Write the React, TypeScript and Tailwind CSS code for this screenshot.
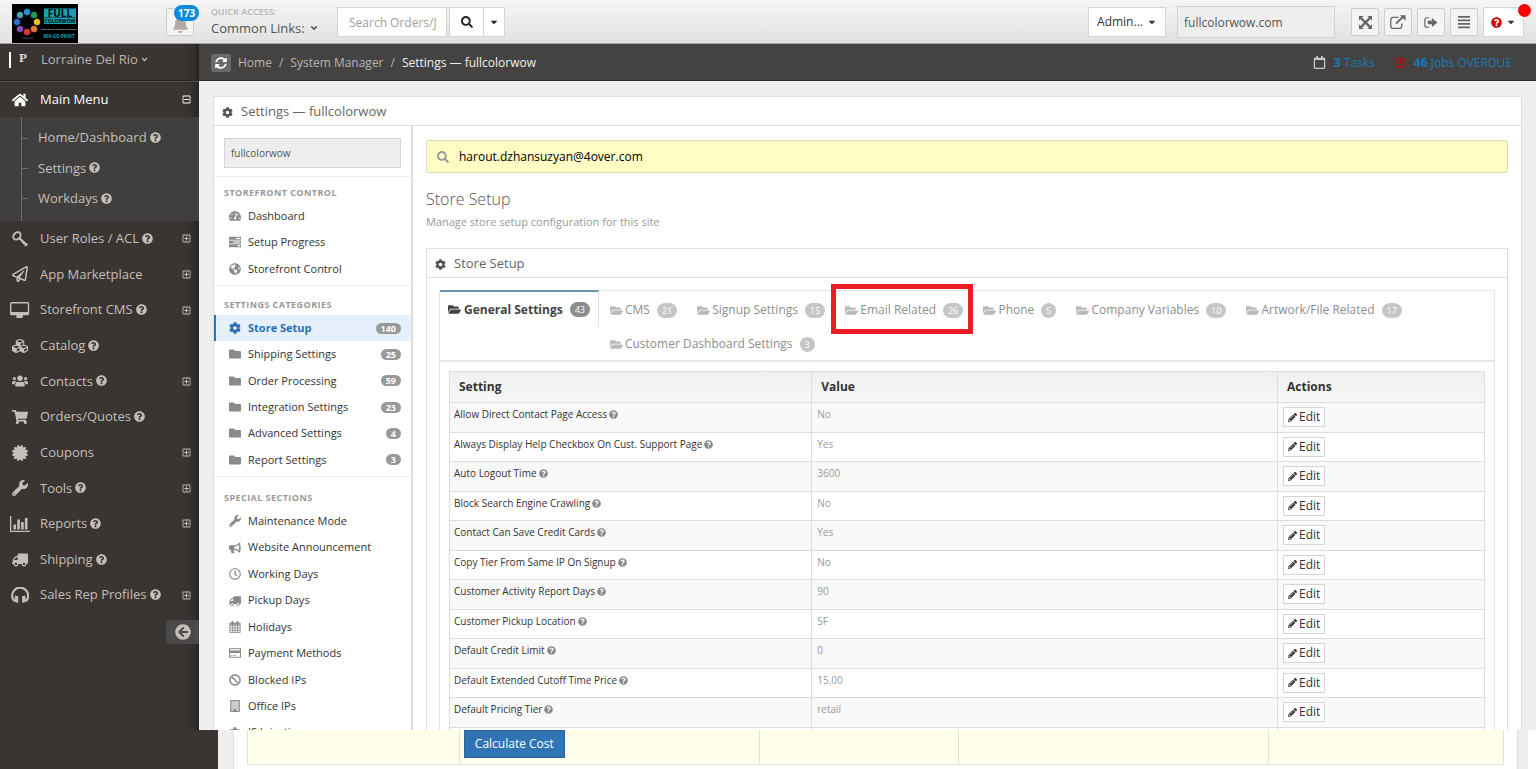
import type { ReactNode } from "react";
import type { IconType } from "react-icons";
import {
  FaAlignJustify,
  FaAngleDown,
  FaArrowCircleLeft,
  FaBan,
  FaBell,
  FaBullhorn,
  FaCaretDown,
  FaCertificate,
  FaCog,
  FaCubes,
  FaFolder,
  FaFolderOpen,
  FaGlobeAmericas,
  FaHome,
  FaPencilAlt,
  FaQuestionCircle,
  FaRegCalendar,
  FaRegClock,
  FaRegMinusSquare,
  FaRegPaperPlane,
  FaRegPlusSquare,
  FaSearch,
  FaShoppingCart,
  FaSyncAlt,
  FaTachometerAlt,
  FaTruck,
  FaUsers,
  FaWrench,
} from "react-icons/fa";

type IconProps = { className?: string };

function KeyIcon({ className }: IconProps) {
  return (
    <svg viewBox="0 0 16 16" className={className} fill="none" stroke="currentColor" strokeWidth="1.9">
      <ellipse cx="4.9" cy="4.9" rx="4.1" ry="3.1" transform="rotate(-45 4.9 4.9)" />
      <path d="M7.6 7.4 14.8 14.2M10.6 12.6l2-2.2M13 15l2.2-2.4" strokeWidth="2.2" />
    </svg>
  );
}

function DesktopIcon({ className }: IconProps) {
  return (
    <svg viewBox="0 0 18 15" className={className} fill="currentColor">
      <path fillRule="evenodd" d="M1.500 0h15A1.500 1.500 0 0 1 18 1.500v9.500a1.500 1.500 0 0 1-1.500 1.500H12V15H6v-2.500H1.500A1.500 1.500 0 0 1 0 11V1.500A1.500 1.500 0 0 1 1.500 0zM1.300 1.300v8h15.400v-8z" />
    </svg>
  );
}

function HeadphonesIcon({ className }: IconProps) {
  return (
    <svg viewBox="0 0 16 14" className={className}>
      <path d="M3 12.500A7 7 0 1 1 13 12.500" fill="none" stroke="currentColor" strokeWidth="1.900" />
      <path d="M3.500 7.500 6.300 8v6L3 13zM12.500 7.500 9.700 8v6l3.300-1z" fill="currentColor" />
    </svg>
  );
}

function BarsIcon({ className }: IconProps) {
  return (
    <svg viewBox="0 0 20 16" className={className} fill="currentColor">
      <path d="M0 0h1.3v14.7H20V16H0zM3.5 8.5h2.6v5H3.5zM7.3 3.5h2.6v10H7.3zM11.1 6h2.6v7.5h-2.6zM14.9 2h2.6v11.5h-2.6z" />
    </svg>
  );
}

function TasksIcon({ className }: IconProps) {
  return (
    <svg viewBox="0 0 14 12" className={className} fill="currentColor">
      <path fillRule="evenodd" d="M0 0h14v3.4H0zM8.5 1v1.4H13V1zM0 4.3h14v3.4H0zM5 5.3v1.4h8V5.3zM0 8.6h14V12H0zM10 9.6V11h3V9.6z" />
    </svg>
  );
}

function ArrowsIcon({ className }: IconProps) {
  return (
    <svg viewBox="0 0 14 14" className={className}>
      <path d="M2 2l10 10M12 2 2 12" stroke="currentColor" strokeWidth="2.400" />
      <path d="M0 0h5L0 5zM14 0v5L9 0zM0 14V9l5 5zM14 14H9l5-5z" fill="currentColor" />
    </svg>
  );
}

function ExternalIcon({ className }: IconProps) {
  return (
    <svg viewBox="0 0 16 14" className={className} fill="none" stroke="currentColor">
      <path d="M8.5 2.3H3A2.2 2.2 0 0 0 .8 4.500v6.600A2.200 2.200 0 0 0 3 13.300h6.600a2.200 2.200 0 0 0 2.200-2.200V8.500" strokeWidth="1.3" />
      <path d="M6 8.600 13 1.800" strokeWidth="1.900" />
      <path d="M10 .2h5.500v5.500z" fill="currentColor" stroke="none" />
    </svg>
  );
}

function SignOutIcon({ className }: IconProps) {
  return (
    <svg viewBox="0 0 15 12" className={className}>
      <path d="M5.500.8H3A2.200 2.200 0 0 0 .8 3v6A2.200 2.200 0 0 0 3 11.200h2.500" fill="none" stroke="currentColor" strokeWidth="1.300" />
      <path d="M4 4h4.500V1L14.500 6l-6 5V8H4z" fill="currentColor" />
    </svg>
  );
}

function CalendarIcon({ className }: IconProps) {
  return (
    <svg viewBox="0 0 13 14" className={className} fill="none" stroke="currentColor">
      <path d="M.5 2.500h12v11H.5zM.5 5.500h12M.5 8.200h12M.5 10.900h12M3.500 5v8.500M6.500 5v8.500M9.500 5v8.500" />
      <path d="M1 3.500h11" strokeWidth="2" />
      <path d="M3.500 0v4M9.500 0v4" strokeWidth="2" />
    </svg>
  );
}

function CardIcon({ className }: IconProps) {
  return (
    <svg viewBox="0 0 14 12" className={className}>
      <path d="M.6 1.100h12.800v9.800H.6z" fill="none" stroke="currentColor" strokeWidth="1.200" />
      <path d="M.6 3h12.800v3H.6zM2 8.500h2v1H2zM5 8.500h3v1H5z" fill="currentColor" />
    </svg>
  );
}

function BuildingIcon({ className }: IconProps) {
  return (
    <svg viewBox="0 0 12 14" className={className}>
      <path d="M1 .6h10v12.800H1z" fill="#c9c9c9" stroke="currentColor" strokeWidth="1.200" />
      <path d="M4.500 10.500h3V14h-3z" fill="currentColor" />
    </svg>
  );
}

function TruckIcon({ className = "" }: IconProps) {
  return <FaTruck className={`${className} -scale-x-100`} />;
}

type Icon = IconType | ((props: IconProps) => ReactNode);

const subMenu = ["Home/Dashboard", "Settings", "Workdays"];

const menu: { label: string; icon: Icon; help?: boolean; plus?: boolean }[] = [
  { label: "User Roles / ACL", icon: KeyIcon, help: true, plus: true },
  { label: "App Marketplace", icon: FaRegPaperPlane, plus: true },
  { label: "Storefront CMS", icon: DesktopIcon, help: true, plus: true },
  { label: "Catalog", icon: FaCubes, help: true },
  { label: "Contacts", icon: FaUsers, help: true, plus: true },
  { label: "Orders/Quotes", icon: FaShoppingCart, help: true },
  { label: "Coupons", icon: FaCertificate, plus: true },
  { label: "Tools", icon: FaWrench, help: true, plus: true },
  { label: "Reports", icon: BarsIcon, help: true, plus: true },
  { label: "Shipping", icon: TruckIcon, help: true },
  { label: "Sales Rep Profiles", icon: HeadphonesIcon, help: true, plus: true },
];

type NavItem = { label: string; icon: Icon; count?: number; active?: boolean };

const storefront: NavItem[] = [
  { label: "Dashboard", icon: FaTachometerAlt },
  { label: "Setup Progress", icon: TasksIcon },
  { label: "Storefront Control", icon: FaGlobeAmericas },
];

const categories: NavItem[] = [
  { label: "Store Setup", icon: FaCog, count: 140, active: true },
  { label: "Shipping Settings", icon: FaFolder, count: 25 },
  { label: "Order Processing", icon: FaFolder, count: 59 },
  { label: "Integration Settings", icon: FaFolder, count: 23 },
  { label: "Advanced Settings", icon: FaFolder, count: 4 },
  { label: "Report Settings", icon: FaFolder, count: 3 },
];

const special: NavItem[] = [
  { label: "Maintenance Mode", icon: FaWrench },
  { label: "Website Announcement", icon: FaBullhorn },
  { label: "Working Days", icon: FaRegClock },
  { label: "Pickup Days", icon: TruckIcon },
  { label: "Holidays", icon: CalendarIcon },
  { label: "Payment Methods", icon: CardIcon },
  { label: "Blocked IPs", icon: FaBan },
  { label: "Office IPs", icon: BuildingIcon },
  { label: "JS Injection", icon: FaCog },
];

const tabs = [
  { label: "CMS", count: 21 },
  { label: "Signup Settings", count: 15 },
  { label: "Email Related", count: 26, marked: true },
  { label: "Phone", count: 5 },
  { label: "Company Variables", count: 10 },
  { label: "Artwork/File Related", count: 17 },
  { label: "Customer Dashboard Settings", count: 3 },
];

const settings = [
  ["Allow Direct Contact Page Access", "No"],
  ["Always Display Help Checkbox On Cust. Support Page", "Yes"],
  ["Auto Logout Time", "3600"],
  ["Block Search Engine Crawling", "No"],
  ["Contact Can Save Credit Cards", "Yes"],
  ["Copy Tier From Same IP On Signup", "No"],
  ["Customer Activity Report Days", "90"],
  ["Customer Pickup Location", "SF"],
  ["Default Credit Limit", "0"],
  ["Default Extended Cutoff Time Price", "15.00"],
  ["Default Pricing Tier", "retail"],
];

const wheel = [
  { x: 15, y: 8, color: "#2b8fd6" },
  { x: 22, y: 11, color: "#1f9d55" },
  { x: 25, y: 18, color: "#e8c11c" },
  { x: 22, y: 25, color: "#e07a2a" },
  { x: 15, y: 28, color: "#d8382e" },
  { x: 8, y: 25, color: "#8c4bb8" },
  { x: 5, y: 18, color: "#2f6fd0" },
  { x: 8, y: 11, color: "#4ba3b5" },
];

function Logo() {
  return (
    <svg viewBox="0 0 66 39" className="h-[39px] w-[66px] shrink-0 self-end bg-black" aria-label="Full Color Wow">
      {wheel.map((dot) => (
        <circle key={dot.color} cx={dot.x} cy={dot.y} r="3.500" fill={dot.color} stroke="#000" strokeWidth="1" strokeDasharray="1 .6" />
      ))}
      <path d="M10 34h11" stroke="#1c5560" strokeWidth="1" />
      <path d="M32 4.500h32v9H32zM32 14h32v6H32z" fill="#15a3b3" />
      <g fontFamily="'Open Sans', sans-serif" fontWeight="700" textAnchor="middle">
        <text x="48" y="12.500" fontSize="10" fill="#000">FULL</text>
        <text x="48" y="19" fontSize="5" fill="#000">COLORWOW</text>
        <text x="47" y="25.500" fontSize="2" fill="#c9c9c9">YOUR ONLINE ONESTOP PRINTSHOP</text>
        <text x="47" y="33.500" fontSize="4.500" fill="#15a3b3">800-GO-PRINT</text>
      </g>
    </svg>
  );
}

function TopBar() {
  const tool = "flex h-7 w-7 items-center justify-center rounded-xs border border-[#cfcfcf] bg-[#f4f4f4] text-[#666]";
  return (
    <header className="flex h-11 shrink-0 items-center border-b border-[#a5a5a5] bg-linear-to-b from-[#f6f6f6] to-[#e1e1e1] pt-px pr-3 pl-3">
      <Logo />
      <button aria-label="Notifications" className="relative ml-[88px] flex h-7 w-7 items-center justify-center rounded-xs border border-[#cfcfcf] bg-[#f4f4f4] text-[#b5aaa5]">
        <FaBell className="mt-1 size-[17px]" />
        <span className="absolute -top-1 left-[7px] flex h-4 items-center rounded-full bg-[#0b8bd9] px-1 text-[10px] font-bold text-white">173</span>
      </button>
      <div className="ml-[17px] w-[110px] whitespace-nowrap">
        <div className="text-[9px] leading-3 font-semibold text-[#b3b3b3]">QUICK ACCESS:</div>
        <button className="flex items-center gap-1 text-[13px] leading-5 text-[#555]">
          Common Links: <FaAngleDown className="size-[10px]" />
        </button>
      </div>
      <input
        aria-label="Search orders"
        placeholder="Search Orders/J"
        className="ml-4 h-[30px] w-[110px] border border-[#d5d5d5] bg-white pl-[11px] text-[12px] placeholder:text-[#a0a0a0]"
      />
      <div className="ml-[2px] flex h-[30px] border border-[#d5d5d5] bg-white text-[#222]">
        <button aria-label="Search" className="flex w-[34px] items-center justify-center border-r border-[#d5d5d5]">
          <FaSearch className="size-3" />
        </button>
        <button aria-label="Search options" className="flex w-5 items-center justify-center">
          <FaCaretDown className="size-[10px]" />
        </button>
      </div>
      <button className="ml-auto flex h-[30px] w-[78px] items-center justify-center gap-1 border border-[#d5d5d5] bg-white text-[12px] text-[#333]">
        Admin... <FaCaretDown className="size-[10px]" />
      </button>
      <input aria-label="Site" defaultValue="fullcolorwow.com" className="ml-[11px] h-8 w-[158px] border border-[#d3d3d3] bg-[#eee] px-[6px] text-[12px] text-[#555]" />
      <div className="ml-4 flex gap-[5px]">
        <button aria-label="Full screen" className={tool}><ArrowsIcon className="size-[13px]" /></button>
        <button aria-label="Open store" className={tool}><ExternalIcon className="h-[14px] w-4" /></button>
        <button aria-label="Sign out" className={tool}><SignOutIcon className="h-[11px] w-[14px]" /></button>
        <button aria-label="Menu" className={tool}><FaAlignJustify className="size-[14px]" /></button>
        <button aria-label="Help" className="relative -my-px flex h-[30px] w-[41px] items-center justify-center gap-1 border border-[#d5d5d5] bg-white">
          <FaQuestionCircle className="size-[11px] text-[#d00000]" />
          <FaCaretDown className="size-[10px] text-[#333]" />
          <span className="absolute -top-1 -right-2 size-[13px] rounded-full bg-[#ff0000]" />
        </button>
      </div>
    </header>
  );
}

function Help() {
  return <FaQuestionCircle className="mb-px ml-[3px] size-[11px] shrink-0" />;
}

function Sidebar() {
  return (
    <aside className="w-[199px] shrink-0 bg-[#3a3532] text-[13px] text-[#c4bfbb] shadow-[inset_-10px_0_10px_-8px_rgba(0,0,0,0.5)]">
      <div className="flex h-[37px] items-start border-b border-[#292522] pt-1 pl-[9px]">
        <span className="mt-1 h-4 w-[2px] bg-white" />
        <span className="ml-2 w-3 font-['Liberation_Serif',serif] text-[13px] leading-[19px] font-bold text-[#ddd]">P</span>
        <button className="ml-[10px] flex items-center gap-[2px] pt-[2px] text-[13px] text-[#b8b3af]">
          Lorraine Del Rio <FaAngleDown className="size-[9px]" />
        </button>
      </div>
      <a href="#main" className="flex h-9 items-center border-t border-[#504b48] pr-2 text-white">
        <span className="flex w-10 justify-center"><FaHome className="size-4" /></span>
        <span className="font-medium">Main Menu</span>
        <FaRegMinusSquare className="ml-auto size-[9px]" />
      </a>
      <div className="h-[104px] bg-[#403f3d] pl-[21px]">
        <ul className="flex h-full flex-col border-l border-[#6f6d6b] pt-[6px] pb-[7px]">
          {subMenu.map((label) => (
            <li key={label} className="flex flex-1 items-center">
              <span className="w-[6px] border-t border-[#6f6d6b]" />
              <a href="#sub" className="ml-[10px] flex items-center">{label}<Help /></a>
            </li>
          ))}
        </ul>
      </div>
      <ul className="flex h-[392px] flex-col">
        {menu.map(({ label, icon: MenuIcon, help, plus }) => (
          <li key={label} className="flex-1">
            <a href="#menu" className="flex h-full items-center pr-2">
              <span className="flex w-10 justify-center"><MenuIcon className="h-4 w-auto" /></span>
              {label}
              {help && <Help />}
              {plus && <FaRegPlusSquare className="ml-auto size-[9px]" />}
            </a>
          </li>
        ))}
      </ul>
      <button aria-label="Collapse menu" className="mt-[7px] ml-auto flex h-6 w-[33px] items-center justify-center rounded-l bg-[#4a4a4a]">
        <FaArrowCircleLeft className="size-4" />
      </button>
    </aside>
  );
}

function Breadcrumbs() {
  return (
    <div className="flex h-[37px] shrink-0 items-center border-b border-[#2d2b2a] bg-[#454341] pt-px pr-6 pl-3 text-[12px] text-[#b5b5b5]">
      <button aria-label="Refresh" className="mr-[7px] flex h-[18px] w-5 items-center justify-center rounded-xs bg-[#6b6a69] text-white">
        <FaSyncAlt className="size-3" />
      </button>
      <nav className="flex gap-[7px]">
        <a href="#home">Home</a>
        <span>/</span>
        <a href="#system">System Manager</a>
        <span>/</span>
        <span className="text-[#eee]">Settings — fullcolorwow</span>
      </nav>
      <FaRegCalendar className="ml-auto size-[13px] shrink-0 text-[#c5d0d5]" />
      <a href="#tasks" className="ml-2 text-[#1579bd]"><b>3</b> Tasks</a>
      <FaRegClock className="ml-5 size-[11px] shrink-0 text-[#c00]" />
      <a href="#jobs" className="ml-2 text-[#1579bd]"><b>46</b> Jobs OVERDUE</a>
    </div>
  );
}

function PanelTitle({ children }: { children: ReactNode }) {
  return (
    <h2 className="flex h-[29px] items-center gap-2 border-b border-[#ddd] px-2 pt-[2px] text-[13px] text-[#666]">
      <FaCog className="size-[11px] text-[#555]" />
      {children}
    </h2>
  );
}

function NavGroup({ title, items, pad, height }: { title: string; items: NavItem[]; pad: string; height: string }) {
  return (
    <section className={`border-t border-[#eee] pb-[3px] ${pad}`}>
      <h3 className="mb-[2px] px-[10px] text-[9px] leading-[17px] font-bold tracking-wider text-[#999]">{title}</h3>
      <ul className={`flex flex-col ${height}`}>
        {items.map(({ label, icon: ItemIcon, count, active }) => (
          <li key={label} className="flex-1">
            <a
              href="#item"
              className={`flex h-full items-center border-l-2 pr-[10px] text-[11px] ${
                active ? "border-[#2a76b8] bg-[#e6effc] font-bold text-[#2a6fb0]" : "border-transparent text-[#333]"
              }`}
            >
              <span className={`flex w-8 justify-center pl-[6px] ${active ? "" : "text-[#8a8a8a]"}`}><ItemIcon className="size-3" /></span>
              <span>{label}</span>
              {count && (
                <span className="ml-auto rounded-full bg-[#999] px-[5px] text-[9px] leading-[11px] font-bold text-white">{count}</span>
              )}
            </a>
          </li>
        ))}
      </ul>
    </section>
  );
}

function Tabs() {
  return (
    <div className="flex h-[71px] items-start border-b-2 border-[#e8e8e8]">
      <button className="-mt-px flex h-[37px] shrink-0 items-center border-t-2 border-r border-t-[#6797ab] border-r-[#e0e0e0] px-2 text-[12px] font-bold text-[#444]">
        <FaFolderOpen className="mr-[3px] size-[13px]" />
        General Settings
        <span className="ml-[7px] rounded-full bg-[#8c8c8c] px-[5px] text-[9px] leading-[15px] font-normal text-white">43</span>
      </button>
      <div className="flex flex-wrap pl-px text-[12px] text-[#8e8e8e]">
        {tabs.map((tab) => (
          <button key={tab.label} className="relative flex h-[34px] items-center px-[10px] pt-1">
            <FaFolderOpen className="mr-[2px] size-[13px] text-[#b9b9b9]" />
            {tab.label}
            <span className="ml-[7px] rounded-full bg-[#c6c6c6] px-[5px] text-[9px] leading-[15px] text-white">{tab.count}</span>
            {tab.marked && <span className="absolute -top-[7px] right-0 -left-1 h-[50px] border-5 border-[#ed1c24]" />}
          </button>
        ))}
      </div>
    </div>
  );
}

function SettingsTable() {
  return (
    <table className="mx-[9px] mt-[9px] h-[386px] w-[calc(100%-18px)] table-fixed border-collapse text-left text-[#333]">
      <thead>
        <tr className="bg-linear-to-b from-[#f0f0f0] to-[#f8f8f8] text-[12px]">
          <th className="h-[31px] w-[35%] border border-[#ddd] px-[9px] font-bold">Setting</th>
          <th className="w-[45%] border border-[#ddd] px-[9px] font-bold">Value</th>
          <th className="w-[20%] border border-[#ddd] px-[9px] font-bold">Actions</th>
        </tr>
      </thead>
      <tbody>
        {settings.map(([name, value]) => (
          <tr key={name} className="odd:bg-[#f9f9f9]">
            <td className="border border-[#ddd] px-1 pb-[5px] text-[10px]">
              <span className="flex items-center">{name}<FaQuestionCircle className="ml-[2px] size-[9px] text-[#888]" /></span>
            </td>
            <td className="border border-[#ddd] px-[5px] pb-[5px] text-[10px] text-[#999]">{value}</td>
            <td className="border border-[#ddd] px-[5px]">
              <button className="flex h-5 items-center gap-[2px] border border-[#d5d5d5] bg-white px-1 text-[12px]">
                <FaPencilAlt className="size-[9px]" /> Edit
              </button>
            </td>
          </tr>
        ))}
        <tr className="odd:bg-[#f9f9f9]">
          <td className="border border-[#ddd]"><div className="h-5" /></td>
          <td className="border border-[#ddd]" />
          <td className="border border-[#ddd]" />
        </tr>
      </tbody>
    </table>
  );
}

function CostRow() {
  return (
    <footer className="flex h-[39px] shrink-0 bg-[#3a3532]">
      <div className="ml-[218px] flex flex-1 border-r-8 border-white bg-[#eee] pr-[10px] pl-[15px]">
        <div className="flex-1 border-x border-[#ddd] bg-white px-[13px] pb-1">
          <div className="grid h-full grid-cols-[212fr_300fr_200fr_310fr_234fr] divide-x divide-[#e2e2d5] border-x border-b border-[#e2e2d5] bg-[#ffffec]">
            <div />
            <div className="pl-1">
              <button className="h-7 border border-[#2565a0] bg-[#3174b3] px-[10px] text-[12px] text-white">Calculate Cost</button>
            </div>
            <div />
            <div />
            <div />
          </div>
        </div>
      </div>
    </footer>
  );
}

export default function App() {
  return (
    <div className="flex h-screen flex-col overflow-hidden bg-white font-['Open_Sans',sans-serif]">
      <div className="flex min-h-0 flex-1 flex-col overflow-hidden">
        <TopBar />
        <div className="flex min-h-0 flex-1">
          <Sidebar />
          <div className="flex min-w-0 flex-1 flex-col">
            <Breadcrumbs />
            <main className="min-h-0 flex-1 overflow-hidden bg-[#efefef] px-[14px] pt-[15px]">
              <div className="border border-[#ddd] bg-white">
                <PanelTitle>Settings — fullcolorwow</PanelTitle>
                <div className="flex">
                  <aside className="w-[199px] shrink-0 border-r-2 border-[#ddd]">
                    <div className="px-[10px] pt-3 pb-[8px]">
                      <input aria-label="Filter settings" defaultValue="fullcolorwow" className="h-[30px] w-full border border-[#d5d5d5] bg-[#eee] px-[6px] text-[10px] text-[#555]" />
                    </div>
                    <NavGroup title="STOREFRONT CONTROL" items={storefront} pad="pt-[7px]" height="h-[79px]" />
                    <NavGroup title="SETTINGS CATEGORIES" items={categories} pad="pt-[10px]" height="h-[158px]" />
                    <NavGroup title="SPECIAL SECTIONS" items={special} pad="pt-3" height="h-[238px]" />
                  </aside>
                  <div className="min-w-0 flex-1 px-[13px] pt-[14px]">
                    <label className="flex h-[33px] items-center rounded-xs border border-[#dcdcb8] bg-[#fffdc4] pl-[10px]">
                      <FaSearch className="size-3 text-[#999]" />
                      <input aria-label="Search settings" defaultValue="harout.dzhansuzyan@4over.com" className="ml-[10px] flex-1 bg-transparent text-[12px] text-black" />
                    </label>
                    <h1 className="mt-[15px] text-[16px] leading-[22px] font-light text-[#555]">Store Setup</h1>
                    <p className="mt-1 text-[11px] leading-4 text-[#999]">Manage store setup configuration for this site</p>
                    <div className="mt-[18px] border border-[#ddd]">
                      <PanelTitle>Store Setup</PanelTitle>
                      <div className="mx-3 mt-3 border border-[#e5e5e5]">
                        <Tabs />
                        <SettingsTable />
                      </div>
                    </div>
                  </div>
                </div>
              </div>
            </main>
          </div>
        </div>
      </div>
      <CostRow />
    </div>
  );
}
